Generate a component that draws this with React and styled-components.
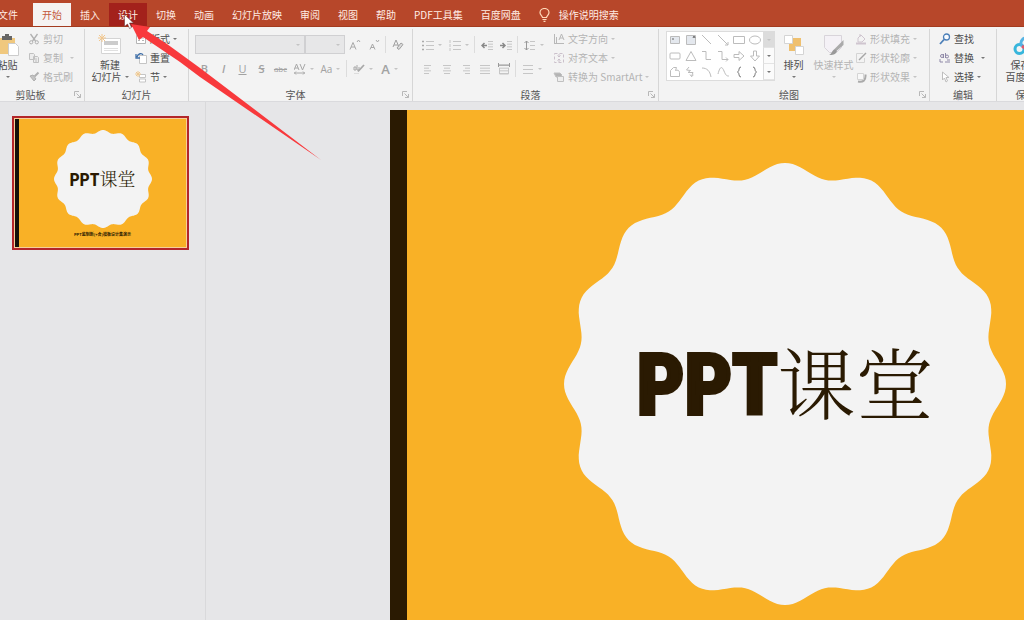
import React, { useState } from 'react';
import styled, { createGlobalStyle, css } from 'styled-components';

const GlobalStyle = createGlobalStyle`
  * {
    box-sizing: border-box;
  }

  body {
    margin: 0;
    background: #e6e6e8;
    font-family: 'Noto Sans CJK SC', 'Noto Sans', sans-serif;
    font-size: 10px;
    line-height: 12px;
    color: #4c4c4c;
  }

  button, select {
    margin: 0;
    padding: 0;
    border: 0;
    background: none;
    font: inherit;
    color: inherit;
  }
`;

const AppShell = styled.div`
  position: relative;
  display: flex;
  flex-direction: column;
  height: 100vh;
  overflow: hidden;
`;

// Tab bar
const TabBar = styled.nav`
  display: flex;
  flex: none;
  height: 27px;
  padding-top: 3px;
  background: #b7472a;
  border-bottom: 1px solid #a33b1f;
  overflow: hidden;
`;

const Tab = styled.button`
  flex: none;
  padding: 0 9px;
  color: #ffece4;
  white-space: nowrap;

  &:first-child {
    margin-left: -17px;
    padding: 0 15px;
  }

  ${({ $active }) => $active && css`
    height: 24px;
    background: #f5f3f2;
    color: #c4593c;
  `}

  ${({ $hovered }) => $hovered && css`
    background: #a3211b;
  `}
`;

const TellMe = styled.button`
  display: flex;
  align-items: center;
  gap: 9px;
  padding: 0 9px;
  color: #ffece4;
  white-space: nowrap;
`;

// Ribbon
const Ribbon = styled.div`
  display: flex;
  flex: none;
  height: 75px;
  padding: 2px 0 0;
  background: #f3f3f3;
  border-bottom: 1px solid #dadadd;
  overflow: hidden;
`;

const Group = styled.section`
  display: flex;
  flex: none;
  flex-direction: column;
  width: ${({ $width }) => $width}px;
  border-right: 1px solid #d6d6d6;

  &:first-child {
    margin-left: -13px;
  }
`;

const GroupBody = styled.div`
  display: flex;
  flex: none;
  height: 59px;
  padding: 0 ${({ $pad }) => $pad || 0}px;
`;

const GroupFooter = styled.footer`
  display: flex;
  align-items: center;
  height: 13px;
`;

const GroupName = styled.span`
  flex: 1;
  text-align: center;
  color: #555555;
`;

const Launcher = styled.button`
  display: flex;
  width: 10px;
  height: 7px;
`;

const Column = styled.div`
  display: flex;
  flex-direction: column;
`;

const Command = styled.button`
  display: flex;
  align-items: center;
  gap: 3px;
  height: 19px;
  white-space: nowrap;

  &:disabled {
    color: #b4b4b4;
  }
`;

const BigCommand = styled.button`
  display: flex;
  flex-direction: column;
  align-items: center;
  justify-content: flex-start;
  width: ${({ $width }) => $width}px;
  padding-top: 5px;
  white-space: nowrap;

  &:disabled {
    color: #b4b4b4;
  }

  > svg {
    margin-bottom: 3px;
  }
`;

const CommandLine = styled.span`
  display: flex;
  align-items: center;
  gap: 3px;
  height: 12px;
`;

const Caret = styled.i`
  flex: none;
  border: 2px solid transparent;
  border-top-color: ${({ $dim }) => ($dim ? '#c4c4c4' : '#777777')};
  border-bottom: 0;
`;

const ToolRows = styled.div`
  display: flex;
  flex-direction: column;
  gap: 5px;
  padding: 6px 6px 0 0;
`;

const ToolRow = styled.div`
  display: flex;
  align-items: center;
  height: 19px;
`;

const Tool = styled.button`
  display: flex;
  align-items: center;
  justify-content: center;
  gap: 4px;
  width: ${({ $wide }) => ($wide ? 27 : 19)}px;
  height: 19px;
  color: #a2a2a2;
`;

const GlyphText = styled.span`
  font-family: 'Open Sans', 'Noto Sans', sans-serif;
  font-size: ${({ $size }) => $size || 11}px;
  font-weight: ${({ $bold }) => ($bold ? 600 : 400)};
  font-style: ${({ $italic }) => ($italic ? 'italic' : 'normal')};
  text-decoration: ${({ $line }) => $line || 'none'};
`;

const Divider = styled.span`
  width: 1px;
  height: 17px;
  margin: 0 2px;
  background: #dcdcdc;
`;

const Combo = styled.label`
  display: flex;
  align-items: center;
  width: ${({ $width }) => $width}px;
  height: 19px;
  padding-right: 4px;
  background: #e7e7e8;
  border: 1px solid #d0d0d2;
`;

const ComboSelect = styled.select`
  flex: 1;
  min-width: 0;
  appearance: none;
  opacity: 1;
`;

// Shape gallery
const Gallery = styled.div`
  display: grid;
  grid-template-columns: repeat(6, 16px) 11px;
  grid-template-rows: repeat(3, 16px);
  align-self: flex-start;
  margin-top: 2px;
  background: #ffffff;
  border: 1px solid #dcdcdc;
`;

const ShapeButton = styled.button`
  display: grid;
  place-items: center;
`;

const GalleryScroll = styled.button`
  display: grid;
  place-items: center;
  background: ${({ $off }) => ($off ? '#dcdcdc' : '#fbfbfb')};
  border-left: 1px solid #dcdcdc;
  border-bottom: 1px solid #e4e4e4;
`;

// Workspace
const Workspace = styled.main`
  display: flex;
  flex: 1;
  min-height: 0;
`;

const ThumbnailPane = styled.aside`
  flex: none;
  width: 206px;
  padding: 14px 16px 0 12px;
  border-right: 1px solid #d9d9db;
`;

const Thumbnail = styled.button`
  display: block;
  width: 100%;
  padding: 1px;
  border: 2px solid #b3262a;
  background: #f6cf9a;
`;

const Editor = styled.div`
  flex: 1;
  min-width: 0;
  padding: 8px 0 0 184px;
  overflow: hidden;
`;

const Slide = styled.div`
  display: grid;
  justify-items: center;
  align-content: start;
  width: 100%;
  min-width: 790px;
  aspect-ratio: 4 / 3;
  padding: 53px 17px 0 0;
  background: #f9b126;
  border-left: 17px solid #2a1a02;
`;

const MiniSlide = styled.div`
  display: grid;
  justify-items: center;
  align-content: start;
  aspect-ratio: 4 / 3;
  padding: 11px 0 0;
  background: #f9b126;
  border-left: 4px solid #141008;
`;

const BadgeArea = styled.div`
  display: grid;
  place-items: center;

  > * {
    grid-area: 1 / 1;
  }
`;

const SlideTitle = styled.h1`
  display: flex;
  align-items: baseline;
  margin: 0;
  color: #2a1a02;
  line-height: 1;
  white-space: nowrap;
`;

const TitleLatin = styled.span`
  font-family: Impact, 'Roboto Condensed', 'Open Sans Condensed', Lato, sans-serif;
  font-size: ${({ $mini }) => ($mini ? 18 : 84)}px;
  font-weight: 700;
  -webkit-text-stroke: ${({ $mini }) => ($mini ? 0 : 4)}px #2a1a02;
`;

const TitleHan = styled.span`
  font-family: 'Noto Serif CJK SC', 'Noto Sans CJK SC', serif;
  font-size: ${({ $mini }) => ($mini ? 18 : 78)}px;
  font-weight: 300;
`;

const MiniCaption = styled.p`
  margin: 3px 0 0;
  font-size: 4px;
  line-height: 6px;
  font-weight: 700;
  color: #2a1a02;
`;

const Annotation = styled.svg`
  position: absolute;
  top: 0;
  left: 0;
  pointer-events: none;
`;

// Sixteen-wave seal outline
const sealPath = (() => {
  const points = [];
  for (let i = 0; i < 360; i += 1) {
    const a = (i * Math.PI) / 180;
    const r = 214.5 + 6.5 * Math.cos(16 * a);
    points.push(`${(221 + r * Math.sin(a)).toFixed(1)} ${(221 - r * Math.cos(a)).toFixed(1)}`);
  }
  return `M${points.join('L')}Z`;
})();

const Seal = ({ size }) => (
  <svg width={size} height={size} viewBox="0 0 442 442">
    <path d={sealPath} fill="#f3f3f3" />
  </svg>
);

const Icon = ({ size = 12, box = 12, color = '#c0c0c0', children }) => (
  <svg width={size} height={size} viewBox={`0 0 ${box} ${box}`} fill="none" stroke={color} strokeWidth="1">
    {children}
  </svg>
);

const icons = {
  cut: <Icon color="#b0b0b0"><path d="M2.5 1l5 7M9.5 1l-5 7" strokeWidth="1.3" /><circle cx="3.2" cy="9.3" r="1.6" /><circle cx="8.8" cy="9.3" r="1.6" /></Icon>,
  copy: <Icon><path d="M1.5 1.5h4l1 1v5h-5zM5.5 4.5h4l1 1v5h-5z" fill="#ececec" /><path d="M7 7h2M7 9h2" /></Icon>,
  brush: <Icon color="#b0b0b0"><path d="M2 5l3-1 3 4-2 2z" fill="#c4c4c4" /><path d="M6.5 5.5l4-4" strokeWidth="2" /></Icon>,
  layout: <Icon color="#b5b5b5"><path d="M1.5 2.5h9v8h-9z" fill="#ffffff" /><path d="M3 5h6M3 7.5h2M7 7.5h2" /></Icon>,
  reset: <Icon color="#c5c5c5"><path d="M4.5 3.5h7v8h-7z" fill="#ffffff" /><path d="M2 5c1-4 5-4 6-2M1 2v4h4" stroke="#3f6fa8" strokeWidth="1.3" /></Icon>,
  section: <Icon color="#c5c5c5"><path d="M4.5 3.5h6v3h-6zM4.5 8h6v3h-6z" fill="#ffffff" /><path d="M3 0v6M0 3h6M1 1l4 4M5 1L1 5" stroke="#f0c990" /></Icon>,
  textDir: <Icon color="#b8b8b8"><path d="M1.5 1v9M3.5 4v6M1 10.5h10M6 7l2.5-6L11 7M7 5h3" /></Icon>,
  alignText: <Icon color="#cbc0cb"><path d="M1.5 1.5h9v9h-9z" strokeDasharray="3 2" /><path d="M6 2v3M4.5 3.5L6 5l1.5-1.5M6 10V7M4.5 8.5L6 7l1.5 1.5" /></Icon>,
  smartArt: <Icon><path d="M1 2h6l2 2-2 2H3z" fill="#b4b4b4" /><path d="M4.5 5.5h6v5h-6z" fill="#eeeeee" /></Icon>,
  fill: <Icon color="#cfc5cf"><path d="M3 5l3-3 4 4-3 3H3zM5 4V1" /><path d="M1 10.5h10" strokeWidth="2" /></Icon>,
  outline: <Icon><path d="M8 1.5H1.5v9h8V6" stroke="#d4d4d4" /><path d="M4 8l7-7" stroke="#a5a5a5" strokeWidth="1.5" /></Icon>,
  effect: <Icon><path d="M3 10.5c5 1 8-1 7.5-7" stroke="#aaaaaa" strokeWidth="2" /><path d="M2.5 2.5h6v6h-6z" fill="#f8f8f8" stroke="#d4d4d4" /></Icon>,
  find: <Icon color="#4b7fb8"><circle cx="7.5" cy="4" r="3" strokeWidth="1.3" fill="#f8fbff" /><path d="M5 6.5L1 11" strokeWidth="1.8" /></Icon>,
  replace: <Icon color="#8f89a8"><circle cx="3" cy="4" r="1.5" /><path d="M4.500 2v4M6.500 1v5M1 7v3h3" /><circle cx="8" cy="4.500" r="1.500" /><path d="M6 10h5M8 8h3" /></Icon>,
  select: <Icon color="#bdbdbd"><path d="M3.5 1v8l2-2 1.5 4 1.5-1L7 6.5h3z" fill="#ffffff" /></Icon>,
};

const Dialog = () => (
  <Launcher type="button" aria-label="更多选项">
    <svg width="7" height="7" viewBox="0 0 7 7" fill="none" stroke="#b8b8b8">
      <path d="M.5 5V.5H5M2.5 2.5l4 4M6.5 3v3.5H3" />
    </svg>
  </Launcher>
);

const Footer = ({ name, launcher }) => (
  <GroupFooter>
    <GroupName>{name}</GroupName>
    {launcher && <Dialog />}
  </GroupFooter>
);

const ListIcon = ({ rows, color = '#c6c6c6', children }) => (
  <Icon color={color}>
    {rows.map(([x1, x2], i) => <path key={i} d={`M${x1} ${2.5 + i * (8 / (rows.length - 1))}H${x2}`} />)}
    {children}
  </Icon>
);

const shapes = [
  <><path d="M1.5 2.5h9v7h-9z" fill="#e4e8ee" /><path d="M3 5h2" stroke="#666666" /></>,
  <><path d="M1.5 1.5h9v9h-9z" fill="#e4e8ee" /><path d="M8 4l1-2 1 2" stroke="#666666" /></>,
  <path d="M1 1l9 9" />,
  <path d="M1 1l10 10M11 8v3H8" />,
  <path d="M.5 2.5h11v7H.5z" />,
  <ellipse cx="6" cy="6" rx="5.5" ry="4" />,
  <rect x="1" y="3" width="10" height="6" rx="1" />,
  <path d="M6 1.5L11 10.5H1z" />,
  <path d="M1 1.5h4v8h5" />,
  <path d="M1 1.5h4v8h6M9 7.5l2 2-2 2" />,
  <path d="M1 4.5h5v-3L11 6l-5 4.5v-3H1z" />,
  <path d="M4.5 1v5h-3L6 11l4.5-5h-3V1z" />,
  <path d="M1.5 10.5v-6l3-3h3l-1 3c2-1 4 0 4 2v4z" />,
  <path d="M4 1L1.500 4l4 .5-2.500 2 5 0-1.500 4M6.500 10.500l-1.500-2M6.500 10.500l2-1.500" />,
  <path d="M1 2c5 0 8 3 9 9" />,
  <path d="M1 8c2-8 4-8 6-3s3 5 5 5" />,
  <path d="M8 1C5 1 7 5 4.5 6 7 7 5 11 8 11" stroke="#777777" />,
  <path d="M4 1c3 0 1 4 3.5 5C5 7 7 11 4 11" stroke="#777777" />,
];

const tabs = ['文件', '开始', '插入', '设计', '切换', '动画', '幻灯片放映', '审阅', '视图', '帮助', 'PDF工具集', '百度网盘'];

const Title = ({ mini }) => (
  <SlideTitle as={mini ? 'span' : 'h1'}>
    <TitleLatin $mini={mini}>PPT</TitleLatin>
    <TitleHan $mini={mini}>课堂</TitleHan>
  </SlideTitle>
);

const ClipboardGroup = () => (
  <Group $width={98}>
    <GroupBody>
      <BigCommand $width={41} type="button">
        <svg width="24" height="22" viewBox="0 0 24 22">
          <path d="M2 4h17v16H2z" fill="#f0c87e" />
          <path d="M6 2h3V0h4v2h3v4H6z" fill="#666666" />
          <path d="M12.5 9.5h7l3 3v9h-10z" fill="#ffffff" stroke="#cccccc" />
        </svg>
        <CommandLine>粘贴</CommandLine>
        <CommandLine><Caret /></CommandLine>
      </BigCommand>
      <Column>
        <Command type="button" disabled>{icons.cut}剪切</Command>
        <Command type="button" disabled>{icons.copy}复制 &nbsp;<Caret $dim /></Command>
        <Command type="button" disabled>{icons.brush}格式刷</Command>
      </Column>
    </GroupBody>
    <Footer name="剪贴板" launcher />
  </Group>
);

const SlidesGroup = () => (
  <Group $width={104}>
    <GroupBody>
      <BigCommand $width={50} type="button">
        <svg width="24" height="22" viewBox="0 0 24 22">
          <path d="M3.5 4.5h19v15h-19z" fill="#ffffff" stroke="#d4d4d4" />
          <path d="M6 7h14v4H6z" fill="#cccccc" />
          <path d="M6 14.5h14M6 16.5h14" stroke="#e0e0e0" />
          <path d="M4 0v8M0 4h8M1 1l6 6M7 1L1 7" stroke="#f2c68c" />
        </svg>
        <CommandLine>新建</CommandLine>
        <CommandLine>幻灯片<Caret /></CommandLine>
      </BigCommand>
      <Column>
        <Command type="button">{icons.layout}版式<Caret /></Command>
        <Command type="button">{icons.reset}重置</Command>
        <Command type="button">{icons.section}节<Caret /></Command>
      </Column>
    </GroupBody>
    <Footer name="幻灯片" />
  </Group>
);

const FontGroup = () => (
  <Group $width={224}>
    <GroupBody $pad={6}>
      <ToolRows>
        <ToolRow>
          <Combo $width={110}><ComboSelect aria-label="字体" disabled /><Caret $dim /></Combo>
          <Combo $width={40}><ComboSelect aria-label="字号" disabled /><Caret $dim /></Combo>
          <Tool type="button" aria-label="增大字号"><Icon color="#a8a8a8"><path d="M1 10.5l3-7 3 7M2 8h4M8 3l1.5-2L11 3" /></Icon></Tool>
          <Tool type="button" aria-label="减小字号"><Icon color="#a8a8a8"><path d="M2 10.5L4.5 5 7 10.5M3 8.5h3M8 1l1.5 2L11 1" /></Icon></Tool>
          <Divider />
          <Tool type="button" aria-label="清除格式"><Icon color="#a0a0a0"><path d="M1 8l3-7 3 7M2 6h4" /><path d="M5 9l4-5 2 1.5-4 5z" fill="#dddddd" /></Icon></Tool>
        </ToolRow>
        <ToolRow>
          <Tool type="button"><GlyphText $bold>B</GlyphText></Tool>
          <Tool type="button"><GlyphText $bold $italic>I</GlyphText></Tool>
          <Tool type="button"><GlyphText $line="underline">U</GlyphText></Tool>
          <Tool type="button"><GlyphText $bold $line="line-through">S</GlyphText></Tool>
          <Tool type="button"><GlyphText $size={8} $line="line-through">abc</GlyphText></Tool>
          <Tool type="button" $wide aria-label="字符间距">
            <Icon color="#a8a8a8"><path d="M0 7l2.5-6L5 7M1 5h3M6 1l2.5 6L11 1M0 10h11M2 8.5L.5 10 2 11.5M9 8.5l1.5 1.5L9 11.5" /></Icon>
            <Caret $dim />
          </Tool>
          <Tool type="button" $wide><GlyphText $size={10}>Aa</GlyphText><Caret $dim /></Tool>
          <Divider />
          <Tool type="button" $wide aria-label="突出显示">
            <Icon color="#a8a8a8"><path d="M1 4h2v3H1zM4 2v5h2V4" /><path d="M5 8.5L11 2" strokeWidth="1.8" /><path d="M1 10.5h5" stroke="#dddddd" /></Icon>
            <Caret $dim />
          </Tool>
          <Tool type="button" $wide><GlyphText $size={13} $bold>A</GlyphText><Caret $dim /></Tool>
        </ToolRow>
      </ToolRows>
    </GroupBody>
    <Footer name="字体" launcher />
  </Group>
);

const full = [[1, 11], [1, 11], [1, 11], [1, 11]];

const ParagraphGroup = () => (
  <Group $width={246}>
    <GroupBody $pad={5}>
      <ToolRows>
        <ToolRow>
          <Tool type="button" $wide aria-label="项目符号">
            <ListIcon rows={[[4, 12], [4, 12], [4, 12]]}><path d="M0 2.5h2M0 6.5h2M0 10.5h2" stroke="#aaaaaa" strokeWidth="1.5" /></ListIcon><Caret $dim />
          </Tool>
          <Tool type="button" $wide aria-label="编号">
            <ListIcon rows={[[4, 12], [4, 12], [4, 12]]}><path d="M1 1v3M1 5v3M1 9v3" /></ListIcon><Caret $dim />
          </Tool>
          <Divider />
          <Tool type="button" aria-label="减少缩进"><ListIcon rows={[[7, 12], [7, 12], [7, 12], [7, 12]]}><path d="M6 6.5H1M3.5 4L1 6.5 3.5 9" stroke="#888888" strokeWidth="1.5" /></ListIcon></Tool>
          <Tool type="button" aria-label="增加缩进"><ListIcon rows={[[7, 12], [7, 12], [7, 12], [7, 12]]}><path d="M0 6.5h5M2.5 4L5 6.5 2.5 9" stroke="#888888" strokeWidth="1.5" /></ListIcon></Tool>
          <Divider />
          <Tool type="button" $wide aria-label="行距"><ListIcon rows={[[6, 11], [6, 11], [6, 11]]}><path d="M2.5 2v9M.5 4l2-2 2 2M.5 9l2 2 2-2" stroke="#999999" /></ListIcon><Caret $dim /></Tool>
        </ToolRow>
        <ToolRow>
          <Tool type="button" aria-label="左对齐"><ListIcon rows={[[2, 9], [2, 7], [2, 9], [2, 7]]} /></Tool>
          <Tool type="button" aria-label="居中"><ListIcon rows={[[2, 10], [3, 9], [2, 10], [3, 9]]} /></Tool>
          <Tool type="button" aria-label="右对齐"><ListIcon rows={[[3, 10], [5, 10], [3, 10], [5, 10]]} /></Tool>
          <Tool type="button" aria-label="两端对齐"><ListIcon rows={full} /></Tool>
          <Tool type="button" aria-label="分散对齐"><ListIcon rows={full}><path d="M.5 0v4M11.5 0v4M1 2h10" stroke="#999999" /><path d="M1.5 5v6h9V5" /></ListIcon></Tool>
          <Divider />
          <Tool type="button" $wide aria-label="分栏"><ListIcon rows={[[1, 11], [1, 11], [1, 11]]} /><Caret $dim /></Tool>
        </ToolRow>
      </ToolRows>
      <Column>
        <Command type="button" disabled>{icons.textDir}文字方向<Caret $dim /></Command>
        <Command type="button" disabled>{icons.alignText}对齐文本<Caret $dim /></Command>
        <Command type="button" disabled>{icons.smartArt}转换为 SmartArt<Caret $dim /></Command>
      </Column>
    </GroupBody>
    <Footer name="段落" launcher />
  </Group>
);

const DrawingGroup = () => (
  <Group $width={271}>
    <GroupBody $pad={7}>
      <Gallery>
        {[0, 1, 2].map((row) => (
          <React.Fragment key={row}>
            {shapes.slice(row * 6, row * 6 + 6).map((shape, i) => (
              <ShapeButton key={i} type="button" aria-label="形状"><Icon color="#bcbcbc">{shape}</Icon></ShapeButton>
            ))}
            <GalleryScroll type="button" $off={row === 0} aria-label="滚动"><Caret $dim={row === 0} /></GalleryScroll>
          </React.Fragment>
        ))}
      </Gallery>
      <BigCommand $width={37} type="button">
        <svg width="22" height="22" viewBox="0 0 22 22">
          <path d="M6 4h12v13H6z" fill="#efc06f" />
          <path d="M1.5 1.5h8v8h-8zM12.5 12.5h8v8h-8z" fill="#ffffff" stroke="#d4d4d4" />
        </svg>
        <CommandLine>排列</CommandLine>
        <CommandLine><Caret /></CommandLine>
      </BigCommand>
      <BigCommand $width={43} type="button" disabled>
        <svg width="22" height="22" viewBox="0 0 22 22">
          <path d="M1.5 1.5h17v12l-5 5h-7l-5-5z" fill="#f4f1f6" stroke="#d8d4da" />
          <path d="M20.5 6v5l-7 6-2-2z" fill="#aaaaaa" />
          <path d="M12 15l2 2c-1 4-5 4-8 4 3-1 3-5 6-6z" fill="#999999" />
        </svg>
        <CommandLine>快速样式</CommandLine>
        <CommandLine><Caret $dim /></CommandLine>
      </BigCommand>
      <Column>
        <Command type="button" disabled>{icons.fill}形状填充<Caret $dim /></Command>
        <Command type="button" disabled>{icons.outline}形状轮廓<Caret $dim /></Command>
        <Command type="button" disabled>{icons.effect}形状效果<Caret $dim /></Command>
      </Column>
    </GroupBody>
    <Footer name="绘图" launcher />
  </Group>
);

const EditingGroup = () => (
  <Group $width={67}>
    <GroupBody $pad={9}>
      <Column>
        <Command type="button">{icons.find}查找</Command>
        <Command type="button">{icons.replace}替换 &nbsp;<Caret /></Command>
        <Command type="button">{icons.select}选择<Caret /></Command>
      </Column>
    </GroupBody>
    <Footer name="编辑" />
  </Group>
);

const NetdiskGroup = () => (
  <Group $width={58}>
    <GroupBody>
      <BigCommand $width={58} type="button">
        <svg width="26" height="22" viewBox="0 0 26 22" fill="none" strokeWidth="3">
          <circle cx="6.5" cy="15" r="4.5" stroke="#38b6dc" />
          <circle cx="19.5" cy="15" r="4.5" stroke="#e3596c" />
          <path d="M9 12a5 5 0 1 1 8 0" stroke="#55b4e4" />
          <path d="M9 12l8 6" stroke="#e3596c" />
        </svg>
        <CommandLine>保存到</CommandLine>
        <CommandLine>百度网盘</CommandLine>
      </BigCommand>
    </GroupBody>
    <Footer name="保存" />
  </Group>
);

const App = () => {
  const [activeTab, setActiveTab] = useState('开始');

  return (
    <AppShell>
      <GlobalStyle />
      <TabBar>
        {tabs.map((tab) => (
          <Tab
            key={tab}
            type="button"
            $active={tab === activeTab}
            $hovered={tab === '设计'}
            onClick={() => setActiveTab(tab)}
          >
            {tab}
          </Tab>
        ))}
        <TellMe type="button">
          <svg width="11" height="14" viewBox="0 0 11 14" fill="none" stroke="#ffd9b8" strokeWidth="1.2">
            <path d="M3.5 9.5C3.5 8 1 7 1 4.8a4.5 4.3 0 0 1 9 0C10 7 7.5 8 7.5 9.5zM3.5 11.5h4M4.5 13.3h2" />
          </svg>
          操作说明搜索
        </TellMe>
      </TabBar>

      <Ribbon>
        <ClipboardGroup />
        <SlidesGroup />
        <FontGroup />
        <ParagraphGroup />
        <DrawingGroup />
        <EditingGroup />
        <NetdiskGroup />
      </Ribbon>

      <Workspace>
        <ThumbnailPane>
          <Thumbnail type="button">
            <MiniSlide>
              <BadgeArea>
                <Seal size={98} />
                <Title mini />
              </BadgeArea>
              <MiniCaption>PPT监制新(+合)模板设计集演示</MiniCaption>
            </MiniSlide>
          </Thumbnail>
        </ThumbnailPane>
        <Editor>
          <Slide>
            <BadgeArea>
              <Seal size={442} />
              <Title />
            </BadgeArea>
          </Slide>
        </Editor>
      </Workspace>

      {/* Pointer and arrow over the design tab */}
      <Annotation width="330" height="170" viewBox="0 0 330 170">
        <path d="M131 24L150 27L147 31L167 44L200 68L321 160L200 77L180 62L143 37L139 40Z" fill="#f8393c" />
        <path d="M124.5 14.5v12l3-2.5 2 4.5 2-1-2-4.5h4z" fill="#ffffff" stroke="#5a2a2a" strokeWidth=".5" />
      </Annotation>
    </AppShell>
  );
};

export default App;
